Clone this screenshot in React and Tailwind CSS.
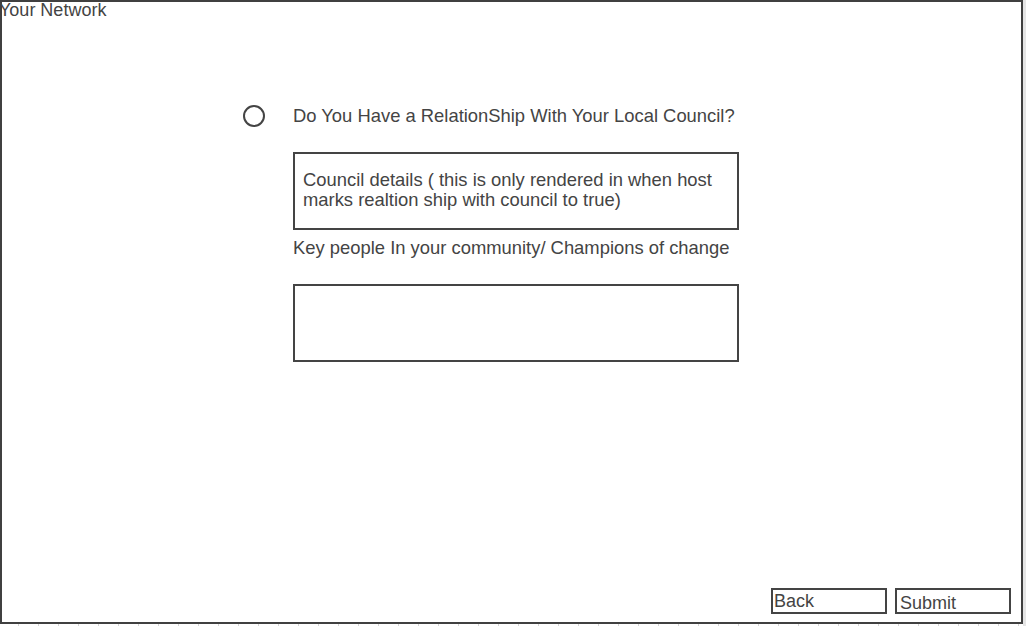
export default function App() {
  const font = { fontFamily: '"Liberation Sans", Arial, sans-serif' };
  return (
    <div
      className="relative h-[626px] w-[1026px] overflow-hidden bg-white text-[#444444]"
      style={font}
    >
      {/* frame */}
      <div className="flex h-[624px] w-[1023px] flex-col border-2 border-[#404040]">
        <div className="-ml-[3px] -mt-[2px] text-[18px] leading-[20px]">Your Network</div>

        {/* form */}
        <div className="ml-[241px] mt-[85px] flex items-center">
          <span className="h-[22px] w-[22px] rounded-full border-2 border-[#444444]" />
          <span className="ml-[28px] text-[18.4px] leading-[20px]">
            Do You Have a RelationShip With Your Local Council?
          </span>
        </div>

        <div className="ml-[291px] flex flex-col">
          <div className="mt-[25px] flex h-[78px] w-[446px] items-center border-2 border-[#444444] px-[8px] pb-[2px] text-[18.4px] leading-[20px]">
            Council details ( this is only rendered in when host marks realtion ship with council to true)
          </div>
          <div className="mt-[8px] text-[18.4px] leading-[20px]">
            Key people In your community/ Champions of change
          </div>
          <div className="mt-[26px] h-[78px] w-[446px] border-2 border-[#444444]" />
        </div>

        {/* actions */}
        <div className="mt-auto mb-[8px] mr-[10px] flex justify-end gap-[8px]">
          <button className="h-[26px] w-[116px] border-2 border-[#444444] pl-[1px] text-left text-[18px] leading-[20px]">
            Back
          </button>
          <button className="h-[26px] w-[116px] border-2 border-[#444444] pl-[3px] pt-[3px] text-left text-[18px] leading-[20px]">
            Submit
          </button>
        </div>
      </div>

      {/* ruler ticks under the frame */}
      <div className="h-[2px] w-[1026px] bg-[repeating-linear-gradient(to_right,transparent_0px,transparent_18px,#d4d4d4_18px,#d4d4d4_19px,transparent_19px,transparent_20px)]" />
      <div className="absolute right-0 top-0 h-[626px] w-[3px] bg-[#e5e5e5]" />
    </div>
  );
}
